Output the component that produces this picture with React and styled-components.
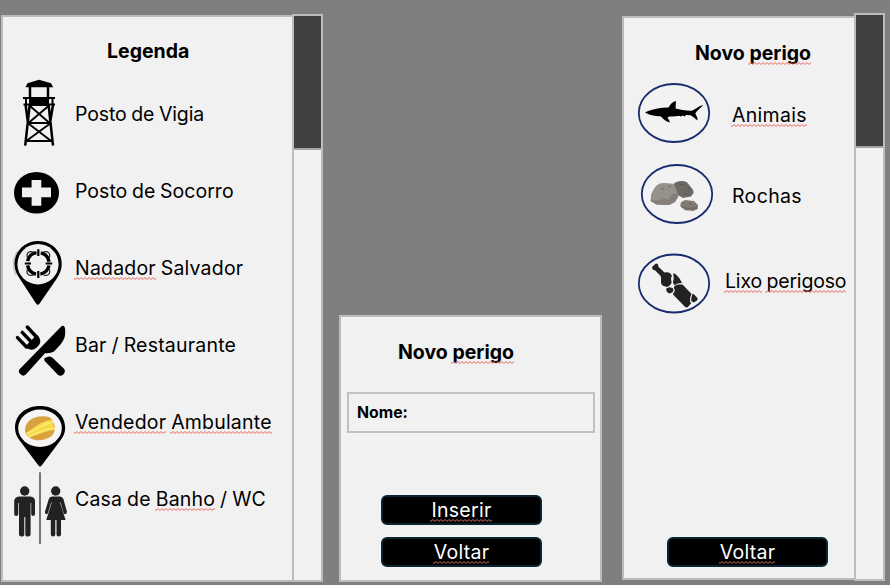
import React from "react";
import styled, { createGlobalStyle, css } from "styled-components";

const GlobalStyle = createGlobalStyle`
  *, *::before, *::after { box-sizing: border-box; }
  body {
    margin: 0;
    background: #7f7f7f;
    color: #000;
    font: 19.5px/24px Inter, "Liberation Sans", Arial, sans-serif;
  }
`;

const squiggle = (color) =>
  `url("data:image/svg+xml,${encodeURIComponent(
    `<svg xmlns='http://www.w3.org/2000/svg' width='4' height='3'><path d='M-1 0.5L1 2.5L3 0.5L5 2.5' fill='none' stroke='${color}' stroke-width='1'/></svg>`
  )}")`;

const Screen = styled.main`
  display: flex;
  align-items: flex-start;
  width: 890px;
  height: 585px;
  overflow: hidden;
  background: #7f7f7f;
`;

const Window = styled.section`
  display: flex;
  align-items: flex-start;
  flex: none;
  margin: ${(p) => p.$margin};
`;

const Panel = styled.div`
  display: flex;
  flex-direction: column;
  width: ${(p) => p.$width}px;
  height: ${(p) => p.$height}px;
  margin-top: ${(p) => p.$drop || 0}px;
  background: #f1f1f1;
  border: 2px solid #bcbcbc;
  ${(p) => p.$joined && css`border-right: 0;`}
`;

const ScrollTrack = styled.div`
  width: 31px;
  height: ${(p) => p.$height}px;
  background: #f1f1f1;
  border: 2px solid #bdbdbd;
`;

const ScrollThumb = styled.div`
  height: ${(p) => p.$height}px;
  background: #404040;
  border-bottom: 2px solid #a3a3a3;
`;

const Title = styled.h1`
  margin: ${(p) => p.$top}px 0 0 ${(p) => p.$left}px;
  font-size: 19.5px;
  line-height: 24px;
  font-weight: 700;
  white-space: nowrap;
`;

const Rows = styled.ul`
  display: flex;
  flex-direction: column;
  margin: ${(p) => p.$top}px 0 0;
  padding: 0;
  list-style: none;
`;

const Row = styled.li`
  display: flex;
  align-items: center;
  height: ${(p) => p.$height}px;
`;

const Icon = styled.svg`
  flex: none;
  display: block;
  overflow: visible;
`;

const Label = styled.span`
  margin-left: ${(p) => p.$indent || 0}px;
  padding-bottom: ${(p) => p.$lift || 0}px;
  letter-spacing: ${(p) => p.$tracking || 0}px;
  word-spacing: -0.8px;
  white-space: nowrap;
`;

const Misspelt = styled.span`
  position: relative;
  &::after {
    content: "";
    position: absolute;
    left: -1px;
    right: 0;
    bottom: 0;
    height: 3px;
    background: ${(p) => squiggle(p.$dark ? "#d4776a" : "#ea5f55")} repeat-x;
  }
`;

const Field = styled.div`
  display: flex;
  align-items: center;
  width: 248px;
  height: 41px;
  margin: 28px 0 0 6px;
  padding-left: 8px;
  border: 2px solid #c1c1c1;
  font-size: 15.8px;
  font-weight: 700;
`;

const Button = styled.button`
  display: flex;
  align-items: center;
  justify-content: center;
  width: 161px;
  height: 30px;
  margin: ${(p) => p.$top}px 0 0 ${(p) => p.$left}px;
  padding: 0;
  border: 2px solid #0b2431;
  border-radius: 6px;
  background: #000;
  color: #fff;
  font: inherit;
  letter-spacing: 0.3px;
`;

const Tower = () => (
  <>
    <path d="M39 79.8L51 83.3L53.2 87.3H25.5L27.5 83.3Z" />
    <path d="M29 97H49V106H29Z" />
    <path d="M23 98H55M23.5 104.5H55M26 97V105M52.5 97V105" fill="none" stroke="#000" strokeWidth="2" />
    <path d="M30 86V98M48 86V98M25.6 105L28 123M53 105L50 123M29.7 105L25.2 145.7M48.6 105L53 145.7" fill="none" stroke="#000" strokeWidth="2.5" />
    <path d="M30 106L49 122.5M48.5 106L29 122.5M28 123H50M29 124L50.5 140.5M49.5 124L27 140.5M26 141H52.5" fill="none" stroke="#000" strokeWidth="1.9" />
  </>
);

const FirstAid = () => (
  <>
    <ellipse cx="36.5" cy="192.8" rx="22.5" ry="20.8" />
    <path d="M31.6 180H41.3V187.5H51V197.3H41.3V205.7H31.6V197.3H22V187.5H31.6Z" fill="#f1f1f1" />
  </>
);

const Lifeguard = () => (
  <>
    <path d="M18 251C13.5 257 12 266 16 275" fill="none" stroke="#c4c4c4" strokeWidth="1.6" />
    <path d="M38 241C25 241 14.5 251 14.5 264C14.5 270 17 275 20 279L36 303.5Q37.8 306 39.6 303.5L56.5 279C59.5 274 61.7 270 61.7 264C61.7 251 51.5 241 38 241Z" />
    <ellipse cx="38" cy="264.2" rx="20.6" ry="20.2" fill="#f1f1f1" />
    <circle cx="38.3" cy="263.4" r="10.9" fill="none" stroke="#000" strokeWidth="3.4" strokeDasharray="12.7 4.42" strokeDashoffset="-2.2" />
    <path d="M38.3 249.3V256M38.3 271V278M24.8 263.5H31M45.6 263.5H52.2" fill="none" stroke="#000" strokeWidth="2.2" />
    <path d="M27.6 258C25.6 253 29 250.6 33.4 252M43.3 252C47.6 250.6 51.1 253 49.1 258M27.6 269C25.6 274 29 276.4 33.4 275M43.3 275C47.6 276.4 51.1 274 49.1 269" fill="none" stroke="#222" strokeWidth="1.2" />
  </>
);

const Cutlery = () => (
  <>
    <path d="M61.5 326.2C63.5 325 65.1 326.4 65.2 330C65.6 337 63.6 340.6 60.5 344.5L54 351.5Q50.5 353.7 45 353.2L25.8 374.6Q23.4 377 20.6 374.3Q17.4 371.4 19.8 368.9Z" />
    <path d="M27.3 327L36.5 337M22.2 332.4L31.4 342M17.5 337.6L26.5 347" fill="none" stroke="#000" strokeWidth="3.4" strokeLinecap="round" />
    <path d="M37.6 335.2C41 339.4 41.2 343 38 346.2C34.5 350.4 30 350.9 25.4 347L28 343.4L31 341L34.6 336.8Z" />
    <path d="M44.8 358L49 356.5Q51.2 356.2 53 358.2L64 368.8Q66 371.4 63.5 374.2Q60.8 377 58.1 375L44.7 361Q43.6 359 44.8 358Z" />
  </>
);

const Vendor = () => (
  <>
    <path d="M40 406C26 406 15 414.5 15 428C15 433 17 437.2 20 441L38.3 465.3Q40 467.7 41.8 465.3L60 441C63 437.2 65.2 433 65.2 428C65.2 414.5 54 406 40 406Z" />
    <ellipse cx="40" cy="428.2" rx="21.8" ry="18.7" fill="#f6f5f4" />
    <path d="M25 430C25 421 34 416 43 416.2C50 416 52.5 419 52.5 422C56 425 55.5 433 51 436.5C45 441 34 442 29 437C26 435.5 25 433 25 430Z" fill="#d9a13f" />
    <path d="M25.8 433C33 429 39 422 51.5 419.5L55 430C46 430 37 436 28.6 437Z" fill="#f5dc47" />
    <path d="M27 433.4C37 430 42 424 53 422.2M28.6 436.4C38 434 44 428 55 428.6" fill="none" stroke="#fbec86" strokeWidth="1.2" />
  </>
);

const Restroom = () => (
  <>
    <path d="M40 472.2V544" fill="none" stroke="#555" strokeWidth="1.6" />
    <g fill="#222">
      <circle cx="24.7" cy="491" r="4.7" />
      <path d="M19 496.5H30.5Q35 497 35 501V514Q35 516 33.2 516Q31.2 516 31.2 514V503H30.6V534.5Q30.6 536.6 28 536.6Q25.3 536.6 25.3 534.5V517H24.3V534.5Q24.3 536.6 21.5 536.6Q19 536.6 19 534.5V503H18.3V514Q18.3 516 16.2 516Q14.2 516 14.2 514V501Q14.5 497 19 496.5Z" />
      <circle cx="55.7" cy="491" r="4.7" />
      <path d="M52 496.5H60Q62.5 496.5 63.4 499L66.9 511.5Q67 514 65.2 514.3Q63.9 514.3 63.3 512L60.6 502.5H60L65.6 520H61V534.5Q61 536.6 58.8 536.6Q56.5 536.6 56.5 534.5V520H55.3V534.5Q55.3 536.6 53 536.6Q50.8 536.6 50.8 534.5V520H46.2L51.8 502.5H51.2L48.3 512Q47.8 514.3 46.3 514.3Q44.6 514 45 511.5L48.8 499Q49.6 496.5 52 496.5Z" />
    </g>
  </>
);

const Oval = ({ cx, cy }) => (
  <ellipse cx={cx} cy={cy} rx="35.2" ry="29" fill="#f2f2f3" stroke="#172b6e" strokeWidth="1.8" />
);

const Shark = () => (
  <>
    <Oval cx="674" cy="113" />
    <path d="M645 112.3C652 109 660 107.5 668.5 107.5C670.5 103.5 673 101.6 676 101L675.5 108.5C680 109.5 686 111 691.4 110.8C695.5 109.6 698 106.3 703.2 105C700 108.5 696.8 111 695.3 113.4C696.3 116 698.2 118 697.4 120.3C695.4 119 693 116.6 690.7 115.2L686 115.1L684.5 116.6L682.8 115.4L680.6 116.4L679 115.8C675 116.6 670 116.2 667.5 117.2C668 119 669.5 120.5 670 122.4C665.8 121.4 662.8 119 661 116.5C655 115.8 648.5 115.4 645 112.3Z" />
  </>
);

const Rocks = () => (
  <>
    <Oval cx="677" cy="194" />
    <path d="M673.5 184C676 181 683 180 687 182.2L692.8 189.5L693.8 192.5L691 196.5L683 198L676 194Z" fill="#6d6a66" />
    <path d="M679 184L684 184.6M687.5 186.5L690 190M684 193.5L689 194.6" fill="none" stroke="#575551" strokeWidth="1" />
    <path d="M654.5 188C657 184 661 182.5 665 183L673 183.8L676.5 190L678.3 196.5L675 202L669 205L656.5 204.5L650.5 201L651.2 194Z" fill="#96918b" />
    <path d="M651 200L659 200.4L664 198L668 199.4L672 194L677.6 193.6L678.3 196.5L675 202L669 205L656.5 204.5L650.5 201Z" fill="#85807b" />
    <path d="M661 188.6L664 189M668 187L671 186" fill="none" stroke="#69645f" strokeWidth=".9" />
    <path d="M681 202.3L685 200L694 201L698 205L697.8 208.8L693.5 211L685 210.3L680.2 206Z" fill="#807c75" />
    <path d="M681 206.6L688 208.4L697.5 208M689 203L692 204" fill="none" stroke="#65615b" strokeWidth="1" />
  </>
);

const Bottle = () => (
  <>
    <Oval cx="674" cy="283.5" />
    <g fill="#242122">
      <path d="M652.3 266.8L655.6 263.7Q656.8 263.2 658 264.6L658.4 266.8L664.5 272.4Q668 271.6 670.4 273.4L671.9 275.4L671 278.6L671.6 283L669.5 285.8L667 287L662.4 285.4Q660.4 283.4 661 280.4Q661.4 277.6 660.4 275.8L655 270.2L653.2 270Q651.6 268.4 652.3 266.8Z" />
      <path d="M673.3 273L676 274.5L679.6 278.6L682 283L677.6 283.4L674.6 285.2L672.9 282.4L673.7 278.4Z" />
      <path d="M666.2 288.5L669.5 287.2L672.6 288L673.6 290L672.3 292.4L669 293.4L666.6 291.4Z" />
      <path d="M674.8 285.8L678 284.4L682.5 284.6L691.6 294L690.2 297.2L690 301.6L691.2 303.2L688.4 306.6Q686.6 308.2 684.9 306.8L672.8 294.3L675 290.6L673.8 287.8Z" />
      <path d="M692.6 293.8L694.2 294.6L697.2 297.8Q698.2 299 697 300.6L693.8 302.4L691.2 301L691.4 297.6Z" />
    </g>
  </>
);

const LEGEND = [
  { Drawing: Tower, text: "Posto de Vigia", tracking: -0.11 },
  { Drawing: FirstAid, text: "Posto de Socorro", tracking: 0.02 },
  { Drawing: Lifeguard, text: <><Misspelt>Nadador</Misspelt> Salvador</>, tracking: 0.19 },
  { Drawing: Cutlery, text: "Bar / Restaurante", tracking: 0.2 },
  { Drawing: Vendor, text: <><Misspelt>Vendedor</Misspelt> <Misspelt>Ambulante</Misspelt></>, tracking: 0.2 },
  { Drawing: Restroom, text: <>Casa de <Misspelt>Banho</Misspelt> / WC</>, tracking: 0.2 },
];

const HAZARDS = [
  { Drawing: Shark, text: <Misspelt>Animais</Misspelt>, top: 75, height: 80, indent: 8, tracking: 0.3 },
  { Drawing: Rocks, text: "Rochas", top: 155, height: 82, indent: 8, tracking: 0.35 },
  { Drawing: Bottle, text: <><Misspelt>Lixo</Misspelt> <Misspelt>perigoso</Misspelt></>, top: 237, height: 88, indent: 1, tracking: -0.18 },
];

export default function App() {
  return (
    <>
      <GlobalStyle />
      <Screen>
        <Window $margin="14px 0 0 1px">
          <Panel $width={291} $height={567} $drop={1} $joined>
            <Title $top={22} $left={104}>Legenda</Title>
            <Rows $top={13}>
              {LEGEND.map(({ Drawing, text, tracking }, i) => (
                <Row key={i} $height={77}>
                  <Icon width="72" height="77" viewBox={`3 ${76 + 77 * i} 72 77`}><Drawing /></Icon>
                  <Label $tracking={tracking} $lift={1}>{text}</Label>
                </Row>
              ))}
            </Rows>
          </Panel>
          <ScrollTrack $height={568}><ScrollThumb $height={134} /></ScrollTrack>
        </Window>

        <Window $margin="315px 0 0 16px">
          <Panel $width={263} $height={267}>
            <Title $top={23} $left={57}>Novo <Misspelt>perigo</Misspelt></Title>
            <Field>Nome:</Field>
            <Button $top={62} $left={40}><Misspelt $dark>Inserir</Misspelt></Button>
            <Button $top={12} $left={40}><Misspelt $dark>Voltar</Misspelt></Button>
          </Panel>
        </Window>

        <Window $margin="13px 0 0 20px">
          <Panel $width={232} $height={564} $drop={3} $joined>
            <Title $top={23} $left={71}>Novo <Misspelt>perigo</Misspelt></Title>
            <Rows $top={10}>
              {HAZARDS.map(({ Drawing, text, top, height, indent, tracking }, i) => (
                <Row key={i} $height={height}>
                  <Icon width="100" height={height} viewBox={`624 ${top} 100 ${height}`}><Drawing /></Icon>
                  <Label $indent={indent} $tracking={tracking}>{text}</Label>
                </Row>
              ))}
            </Rows>
            <Button $top={212} $left={43}><Misspelt $dark>Voltar</Misspelt></Button>
          </Panel>
          <ScrollTrack $height={568}><ScrollThumb $height={133} /></ScrollTrack>
        </Window>
      </Screen>
    </>
  );
}
